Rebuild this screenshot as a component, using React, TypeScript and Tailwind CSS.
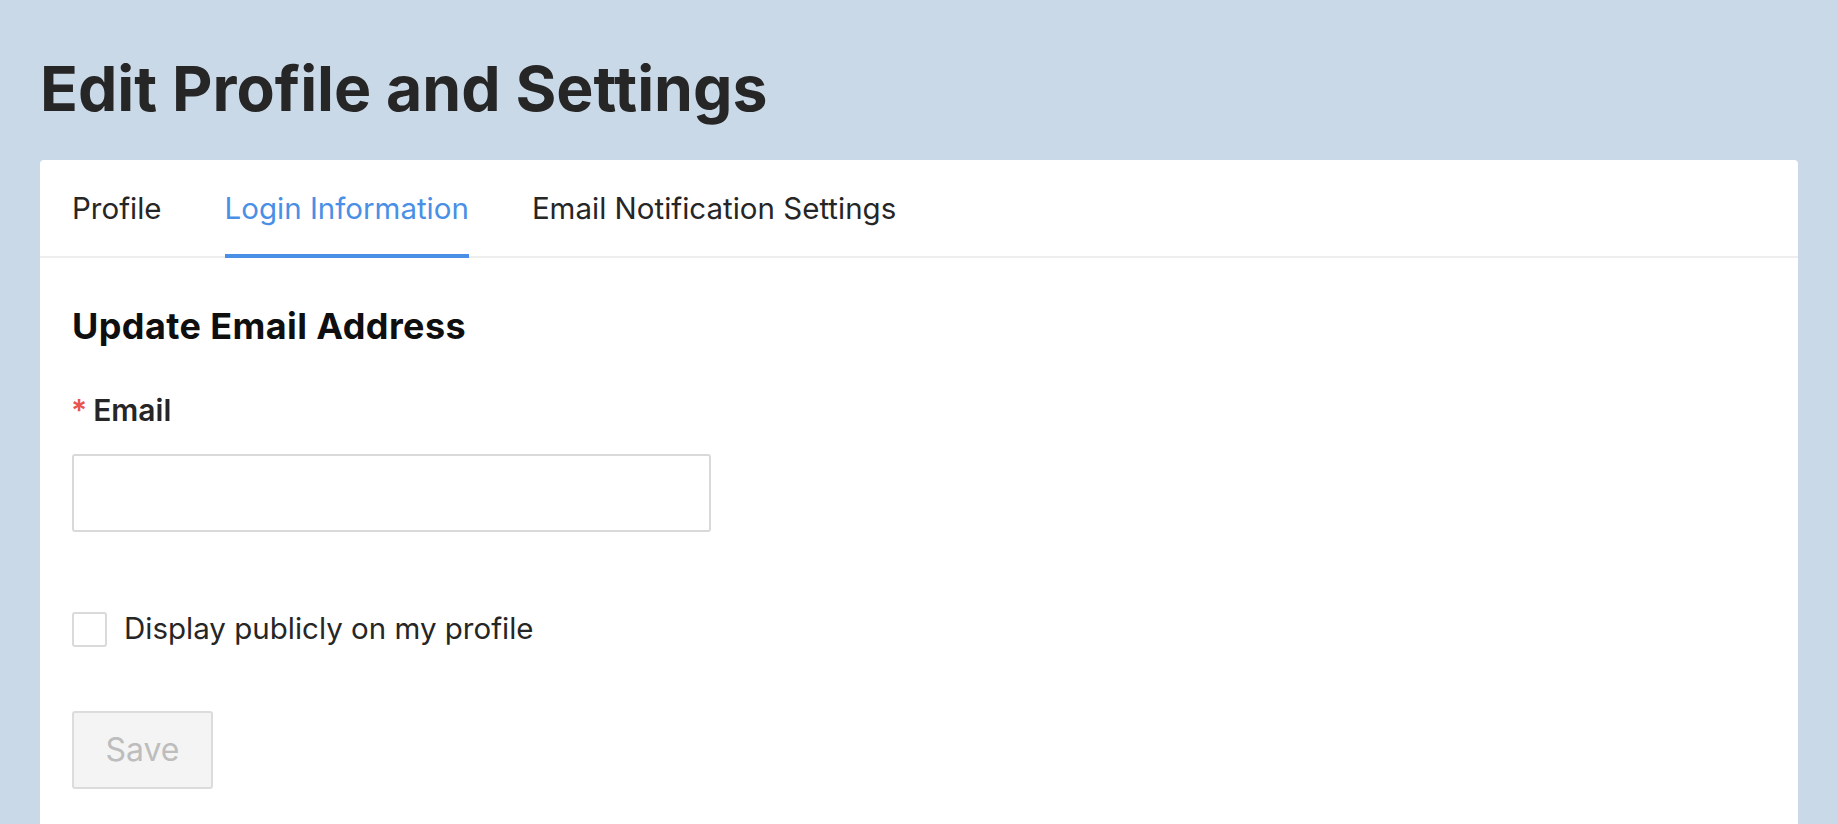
import { useState } from 'react';

const TABS = ['Profile', 'Login Information', 'Email Notification Settings'];

export default function App() {
  const [active, setActive] = useState('Login Information');
  const [email, setEmail] = useState('');
  const [show, setShow] = useState(false);

  return (
    <div className="min-h-screen bg-[#cad9e8] px-10 font-['Inter',sans-serif] text-[#262626]">
      <h1 className="pt-[57px] text-[62.5px] font-bold leading-none text-[#262626]">
        Edit Profile and Settings
      </h1>

      <section className="mt-[40px] rounded-t-[4px] bg-white">
        <nav className="flex gap-[63px] border-b-2 border-[#eeeeee] px-8">
          {TABS.map((t) => (
            <button
              key={t}
              onClick={() => setActive(t)}
              className={`-mb-[2px] border-b-4 pt-[34px] pb-[30.5px] text-[29.5px] leading-none ${
                active === t ? 'border-[#4a8fe6] text-[#4a8fe6]' : 'border-transparent text-[#262626]'
              }`}
            >
              {t}
            </button>
          ))}
        </nav>

        <div className="px-8 pt-[50px] pb-[60px]">
          <h2 className="text-[36px] font-bold leading-none tracking-[0.4px] text-[#0f0f0f]">
            Update Email Address
          </h2>

          <label className="mt-[51px] flex items-baseline text-[30px] font-semibold leading-none text-[#262626]">
            <span className="mr-[6px] -ml-[1px] text-[30px] text-[#e8554e]">*</span>
            Email
          </label>

          <input
            type="email"
            value={email}
            onChange={(e) => setEmail(e.target.value)}
            className="mt-[29px] block h-[78px] w-[639px] rounded-[3px] border-2 border-[#d9d9d9] px-4 text-[28px] outline-none"
          />

          <label className="mt-[80px] flex cursor-pointer items-center gap-[17px]">
            <span
              onClick={() => setShow(!show)}
              className="h-[35px] w-[35px] rounded-[3px] border-2 border-[#dadada] bg-white"
            />
            <span className="text-[29.5px] leading-none text-[#262626]">Display publicly on my profile</span>
          </label>

          <button
            disabled
            className="mt-[64px] flex h-[78px] w-[141px] items-center justify-center rounded-[3px] border-2 border-[#dcdcdc] bg-[#f4f4f4] text-[32px] leading-none text-[#bdbdbd]"
          >
            Save
          </button>
        </div>
      </section>
    </div>
  );
}
